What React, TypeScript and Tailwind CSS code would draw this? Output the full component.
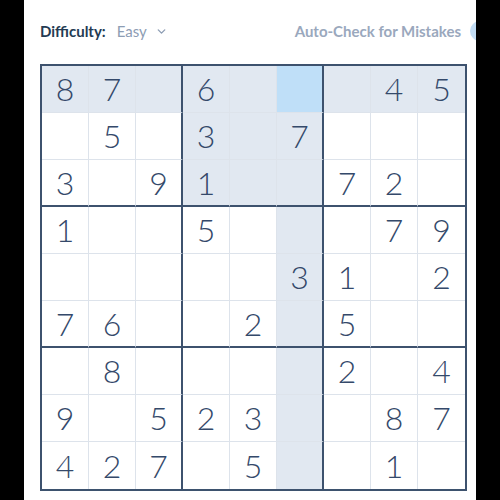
import { ChevronDown } from 'lucide-react';

const board: (number | null)[][] = [
  [8, 7, null, 6, null, null, null, 4, 5],
  [null, 5, null, 3, null, 7, null, null, null],
  [3, null, 9, 1, null, null, 7, 2, null],
  [1, null, null, 5, null, null, null, 7, 9],
  [null, null, null, null, null, 3, 1, null, 2],
  [7, 6, null, null, 2, null, 5, null, null],
  [null, 8, null, null, null, null, 2, null, 4],
  [9, null, 5, 2, 3, null, null, 8, 7],
  [4, 2, 7, null, 5, null, null, 1, null],
];

const selected = { row: 0, col: 5 };

function cellClass(r: number, c: number) {
  const isSelected = r === selected.row && c === selected.col;
  const sameBox =
    Math.floor(r / 3) === Math.floor(selected.row / 3) &&
    Math.floor(c / 3) === Math.floor(selected.col / 3);
  const related = r === selected.row || c === selected.col || sameBox;

  let bg = 'bg-white';
  if (isSelected) bg = 'bg-[#bfdff8]';
  else if (related) bg = 'bg-[#e1e8f1]';

  let right = '';
  if (c < 8) right = c % 3 === 2 ? 'border-r-2 border-r-[#3d526e]' : 'border-r border-r-[#dde3eb]';
  let bottom = '';
  if (r < 8) bottom = r % 3 === 2 ? 'border-b-2 border-b-[#3d526e]' : 'border-b border-b-[#dde3eb]';

  return `${bg} ${right} ${bottom} h-[47px] flex items-center justify-center`;
}

export default function App() {
  return (
    <div className="min-h-screen bg-black flex justify-center">
      <div className="w-[452px] h-[500px] bg-white overflow-hidden pl-4 pt-[20px] font-['Lato','Noto_Sans',sans-serif]">
        <div className="w-[466px] h-[22px] flex items-center">
          <span className="text-[15px] font-bold text-[#243b53]">Difficulty:</span>
          <span className="ml-[11px] text-[15px] text-[#8d9db4]">Easy</span>
          <ChevronDown className="ml-[8px] w-[13px] h-[13px] text-[#8d9db4]" strokeWidth={2.5} />
          <span className="ml-auto text-[15px] font-bold text-[#9aa8bd]">Auto-Check for Mistakes</span>
          <div className="ml-[9px] w-[36px] h-[20px] rounded-full bg-[#c3ddf5]"></div>
        </div>

        <div className="mt-[22px] w-[427px] border-2 border-[#3d526e] grid grid-cols-9">
          {board.map((row, r) =>
            row.map((v, c) => (
              <div key={`${r}-${c}`} className={cellClass(r, c)}>
                <span className="text-[32px] font-light leading-none text-[#34496a]">{v ?? ''}</span>
              </div>
            ))
          )}
        </div>
      </div>
    </div>
  );
}
